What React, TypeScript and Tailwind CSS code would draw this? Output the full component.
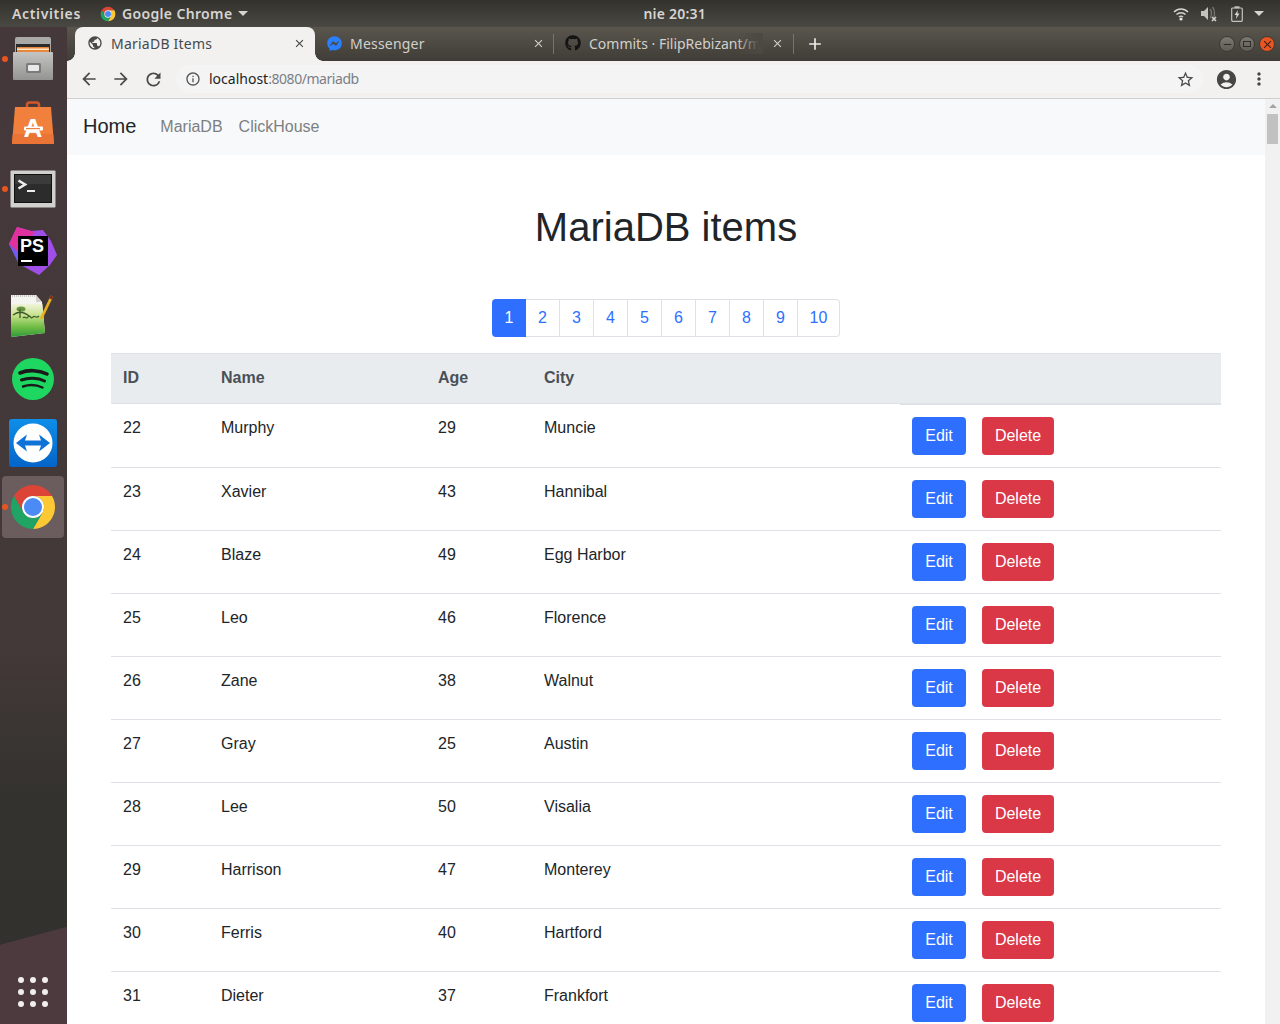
import { MdArrowBack, MdArrowForward, MdRefresh, MdInfoOutline, MdStarBorder, MdAccountCircle, MdMoreVert, MdPublic, MdClose, MdAdd, MdRemove } from "react-icons/md";
import { FaGithub, FaFacebookMessenger } from "react-icons/fa";

const items = [
  [22, "Murphy", 29, "Muncie"],
  [23, "Xavier", 43, "Hannibal"],
  [24, "Blaze", 49, "Egg Harbor"],
  [25, "Leo", 46, "Florence"],
  [26, "Zane", 38, "Walnut"],
  [27, "Gray", 25, "Austin"],
  [28, "Lee", 50, "Visalia"],
  [29, "Harrison", 47, "Monterey"],
  [30, "Ferris", 40, "Hartford"],
  [31, "Dieter", 37, "Frankfort"],
];

const ChromeLogo = ({ size }: { size: number }) => (
  <svg width={size} height={size} viewBox="0 0 48 48">
    <path fill="#db4437" d="M4.95 13A22 22 0 0 1 43.05 13L24 13A11 11 0 0 0 14.47 29.5Z" />
    <path fill="#fcc934" d="M43.05 13A22 22 0 0 1 24 46L33.53 29.5A11 11 0 0 0 24 13Z" />
    <path fill="#1fa463" d="M24 46A22 22 0 0 1 4.95 13L14.47 29.5A11 11 0 0 0 33.53 29.5Z" />
    <circle cx="24" cy="24" r="11" fill="#fff" />
    <circle cx="24" cy="24" r="9" fill="#4c8bf5" />
  </svg>
);

const FilesIcon = () => (
  <svg width="42" height="43" viewBox="0 0 42 43">
    <defs>
      <linearGradient id="cab" x1="0" y1="0" x2="0" y2="1">
        <stop offset="0" stopColor="#c4c4c2" />
        <stop offset="1" stopColor="#949492" />
      </linearGradient>
    </defs>
    <path d="M3 2Q3 0 5 0H37Q39 0 39 2V16H3Z" fill="#a9a9a7" />
    <rect x="4" y="7" width="34" height="11" fill="#2b2b2b" />
    <rect x="5" y="10" width="32" height="7" fill="#e8873c" />
    <rect x="5" y="11.5" width="32" height="1.5" fill="#fde6c4" />
    <rect x="1" y="15" width="40" height="28" rx="1" fill="url(#cab)" />
    <rect x="14" y="26" width="15" height="10" rx="1.5" fill="#7b7b7b" />
    <rect x="16" y="28" width="11" height="6" rx="1" fill="#e9e9e9" />
  </svg>
);

const SoftwareIcon = () => (
  <svg width="42" height="43" viewBox="0 0 42 43">
    <path d="M15 12V4a2.5 2.5 0 0 1 2.5-2.5h7A2.5 2.5 0 0 1 27 4v8" fill="none" stroke="#d4572a" strokeWidth="2.5" />
    <path d="M3 6H39L42 43H0Z" fill="#f0803c" />
    <path d="M0.8 33H41.2L42 43H0Z" fill="#ea7436" />
    <text x="21" y="36" textAnchor="middle" fontFamily="Liberation Sans" fontWeight="700" fontSize="26" fill="#fff">A</text>
    <rect x="12" y="25.5" width="19" height="4" rx="1" fill="#fff" />
    <rect x="14" y="27" width="14" height="1.2" fill="#f0803c" />
  </svg>
);

const TerminalIcon = () => (
  <svg width="46" height="38" viewBox="0 0 46 38">
    <rect x="0.5" y="0.5" width="45" height="37" rx="1" fill="#d0d0ce" />
    <rect x="4" y="4" width="38" height="29" fill="#111" />
    <rect x="5" y="5" width="36" height="27" fill="#2c2c2c" />
    <rect x="5" y="5" width="36" height="9" fill="#3b3b3b" />
    <path d="M8.5 10.5L15 14.5L8.5 18.5" fill="none" stroke="#ececec" strokeWidth="2.6" />
    <rect x="17" y="20" width="8" height="2" fill="#ececec" />
  </svg>
);

const PhpStormIcon = () => (
  <div className="relative w-[48px] h-[48px]">
    <svg width="48" height="48" viewBox="0 0 48 48" className="absolute inset-0">
      <path d="M8 0L22 4L34 3L42 14L48 28L41 38L30 48L10 37L0 17Z" fill="#a04ee8" />
      <path d="M8 0L26 5L10 26L0 17Z" fill="#e1319e" />
      <path d="M0 17L10 26L10 37Z" fill="#6d5cf0" />
    </svg>
    <div className="absolute left-[9px] top-[9px] w-[30px] h-[30px] bg-black">
      <span className="absolute left-[2px] top-[0px] text-[18px] leading-[20px] font-bold text-white font-['Liberation_Sans']">PS</span>
      <div className="absolute left-[3px] bottom-[4px] w-[11px] h-[2px] bg-white" />
    </div>
  </div>
);

const GeditIcon = () => (
  <svg width="46" height="42" viewBox="0 0 46 42">
    <defs>
      <linearGradient id="grass" x1="0" y1="0" x2="0" y2="1">
        <stop offset="0" stopColor="#f0f4dc" />
        <stop offset="0.35" stopColor="#c5e08a" />
        <stop offset="0.7" stopColor="#6fbc44" />
        <stop offset="1" stopColor="#2f9a3a" />
      </linearGradient>
    </defs>
    <path d="M1 0H26L32 7L35 38L1 42Z" fill="#f4f4f0" />
    <path d="M1 9H32.3L35 38L1 42Z" fill="url(#grass)" />
    <path d="M26 0L32 7L26 7Z" fill="#cfcfca" />
    <path d="M2 1H26" stroke="#9a9a98" strokeWidth="1.2" strokeDasharray="1 1" />
    <ellipse cx="11" cy="14" rx="4.5" ry="2.6" fill="#6a9440" />
    <path d="M3 20C8 16 13 16 19 21M10 14V23" stroke="#3c5a28" strokeWidth="1.3" fill="none" />
    <path d="M13 23C15 20 16 25 18 22C20 19 21 25 23 22C25 20 26 24 29 21" stroke="#3c5a28" strokeWidth="1.2" fill="none" />
    <path d="M42 1L31 24" stroke="#e8b020" strokeWidth="2.8" />
    <path d="M42 1L40.6 4" stroke="#7a2a20" strokeWidth="2.8" />
  </svg>
);

const SpotifyIcon = () => (
  <svg width="42" height="42" viewBox="0 0 42 42">
    <circle cx="21" cy="21" r="21" fill="#1ed760" />
    <path d="M8 15C16 11.5 27 12 35 16" fill="none" stroke="#1a1a1a" strokeWidth="3.6" strokeLinecap="round" />
    <path d="M9.5 22C16 19.5 26 19.5 32.5 23" fill="none" stroke="#1a1a1a" strokeWidth="3" strokeLinecap="round" />
    <path d="M11 28.5C17 26.5 25 27 30.5 29.5" fill="none" stroke="#1a1a1a" strokeWidth="2.4" strokeLinecap="round" />
  </svg>
);

const TeamViewerIcon = () => (
  <svg width="48" height="48" viewBox="0 0 48 48">
    <defs>
      <linearGradient id="tv" x1="0" y1="0" x2="0" y2="1">
        <stop offset="0" stopColor="#0e8ee9" />
        <stop offset="1" stopColor="#0564c8" />
      </linearGradient>
    </defs>
    <rect width="48" height="48" rx="3" fill="url(#tv)" />
    <circle cx="24" cy="24" r="19.5" fill="#fff" />
    <path d="M7 24L18 15.5L16 21.5H32L30 15.5L41 24L30 32.5L32 26.5H16L18 32.5Z" fill="#0e72d6" />
  </svg>
);

const Dot = () => <div className="absolute left-[2px] top-1/2 -mt-[3px] w-[6px] h-[6px] rounded-full bg-[#e95420]" />;

const Dock = () => (
  <div className="relative w-[67px] shrink-0 flex flex-col items-center pt-[10px] pr-[1px] bg-[linear-gradient(180deg,#45383b_0%,#433938_62%,#33322e_78%,#33312e_100%)]">
    {/* wave at the bottom of the dock */}
    <div className="absolute left-0 right-0 bottom-0 h-[97px] bg-[linear-gradient(to_bottom_right,transparent_49%,#4d3a3f_50%)] bg-[length:100%_18px] bg-no-repeat" />
    <div className="absolute left-0 right-0 bottom-0 h-[79px] bg-[#4d3a3f]" />

    <div className="relative w-full h-[43px] flex items-center justify-center"><Dot /><FilesIcon /></div>
    <div className="relative w-full h-[43px] mt-[21px] flex items-center justify-center"><SoftwareIcon /></div>
    <div className="relative w-full h-[38px] mt-[26px] flex items-center justify-center"><Dot /><TerminalIcon /></div>
    <div className="relative w-full h-[48px] mt-[19px] flex items-center justify-center"><PhpStormIcon /></div>
    <div className="relative w-full h-[42px] mt-[20px] flex items-center justify-center"><GeditIcon /></div>
    <div className="relative w-full h-[42px] mt-[21px] mb-[1px] flex items-center justify-center"><SpotifyIcon /></div>
    <div className="relative w-full h-[48px] mt-[18px] flex items-center justify-center"><TeamViewerIcon /></div>
    <div className="relative w-full h-[62px] mt-[9px] flex items-center justify-center">
      <div className="w-[62px] h-[62px] rounded-[4px] bg-[#6b5c5e] flex items-center justify-center"><ChromeLogo size={48} /></div>
      <Dot />
    </div>

    <div className="relative mt-auto mb-[17px] grid grid-cols-3 gap-[6px]">
      {[...Array(9)].map((_, i) => (
        <div key={i} className="w-[6px] h-[6px] rounded-full bg-[#f0eeee]" />
      ))}
    </div>
  </div>
);

const TopBar = () => (
  <div className="h-[27px] shrink-0 flex items-center bg-[linear-gradient(180deg,#34322d_0%,#4a4842_100%)] text-[#d6d5d1] text-[14px] font-['Noto_Sans',sans-serif] font-semibold relative">
    <span className="ml-[12px] tracking-[0.65px]">Activities</span>
    <span className="ml-[19px]"><ChromeLogo size={16} /></span>
    <span className="ml-[6px] tracking-[0.35px]">Google Chrome</span>
    <span className="ml-[6px] border-x-[5px] border-x-transparent border-t-[5px] border-t-[#d6d5d1]" />
    <span className="ml-[395px] tracking-[0.2px]">nie 20:31</span>
    <div className="ml-auto mr-[16px] flex items-center">
      <svg width="16" height="14" viewBox="0 0 16 14">
        <path d="M1 5C5 1 11 1 15 5M3.5 7.5C6 5.2 10 5.2 12.5 7.5M6 10C7 9 9 9 10 10" fill="none" stroke="#d6d5d1" strokeWidth="1.4" />
        <circle cx="8" cy="12" r="1.6" fill="#e6e5e1" />
      </svg>
      <svg width="18" height="16" viewBox="0 0 18 16" className="ml-[11px]">
        <path d="M1 5H4L8 1V14L4 10H1Z" fill="#c4c3bf" />
        <path d="M10 3C12 5 12 10 10 12M12.5 1C15 4 15 10 13.5 11" fill="none" stroke="#77756f" strokeWidth="1.3" />
        <path d="M12 11L16 15M16 11L12 15" stroke="#d6d5d1" strokeWidth="1.6" />
      </svg>
      <svg width="12" height="16" viewBox="0 0 12 16" className="ml-[13px]">
        <rect x="0.7" y="2" width="10.6" height="13.3" rx="1" fill="none" stroke="#c4c3bf" strokeWidth="1.2" />
        <rect x="3.5" y="0.3" width="5" height="2" fill="#c4c3bf" />
        <path d="M7 4L3.5 9H5.5L5 13L8.5 7.5H6.4Z" fill="#d6d5d1" />
      </svg>
      <span className="ml-[11px] border-x-[5px] border-x-transparent border-t-[5px] border-t-[#d6d5d1]" />
    </div>
  </div>
);

const TabStrip = () => (
  <div className="h-[34px] shrink-0 flex items-center bg-[linear-gradient(180deg,#5a564e_0%,#3f3d37_100%)] font-['Noto_Sans',sans-serif] text-[14px] pl-[8px]">
    {/* active tab */}
    <div className="relative w-[240px] h-full rounded-t-[8px] bg-[#f2f1f0] flex items-center text-[#45494d] pl-[12px] pr-[9px] pb-[2px]">
      <div className="absolute -left-[8px] bottom-0 w-[8px] h-[8px] bg-[radial-gradient(circle_at_0_0,transparent_7.5px,#f2f1f0_8px)]" />
      <div className="absolute -right-[8px] bottom-0 w-[8px] h-[8px] bg-[radial-gradient(circle_at_100%_0,transparent_7.5px,#f2f1f0_8px)]" />
      <MdPublic className="text-[16px] text-[#4a4a4a] shrink-0" />
      <span className="ml-[8px] tracking-[0.23px]">MariaDB Items</span>
      <MdClose className="ml-auto text-[13px] text-[#444]" />
    </div>
    <div className="w-[238px] h-full flex items-center text-[#d2d0cb] pl-[12px] pr-[8px] pb-[2px]">
      <FaFacebookMessenger className="text-[15px] text-[#2a7fff] shrink-0" />
      <span className="ml-[8px] tracking-[0.2px]">Messenger</span>
      <MdClose className="ml-auto text-[13px] text-[#d2d0cb]" />
    </div>
    <div className="w-px h-[20px] bg-[#76736c]" />
    <div className="w-[239px] h-full flex items-center text-[#d2d0cb] pl-[11px] pr-[9px] pb-[2px]">
      <FaGithub className="text-[16px] text-[#141414] shrink-0" />
      <div className="relative ml-[8px] w-[174px] overflow-hidden whitespace-nowrap">
        Commits · FilipRebizant/mariadb
        <div className="absolute right-0 top-0 bottom-0 w-[26px] bg-[linear-gradient(90deg,transparent,#4c4943_85%)]" />
      </div>
      <MdClose className="ml-auto text-[13px] text-[#d2d0cb]" />
    </div>
    <div className="w-px h-[20px] bg-[#76736c]" />
    <MdAdd className="ml-[11px] text-[#ecebe8] text-[20px]" />
    <div className="ml-auto mr-[5px] flex items-center gap-[4px]">
      <div className="w-[16px] h-[16px] rounded-full bg-[linear-gradient(180deg,#7a7870,#5f5d56)] border border-[#3c3a35] flex items-center justify-center">
        <MdRemove className="text-[13px] text-[#2f2e2a]" />
      </div>
      <div className="w-[16px] h-[16px] rounded-full bg-[linear-gradient(180deg,#7a7870,#5f5d56)] border border-[#3c3a35] flex items-center justify-center">
        <div className="w-[8px] h-[6px] border border-[#2f2e2a]" />
      </div>
      <div className="w-[16px] h-[16px] rounded-full bg-[#e95420] border border-[#3c3a35] flex items-center justify-center">
        <MdClose className="text-[13px] text-[#3a2318]" />
      </div>
    </div>
  </div>
);

const Toolbar = () => (
  <div className="h-[38px] shrink-0 flex items-center bg-[#f2f1f0] border-b border-[#cfcfcf] pb-[1px]">
    <MdArrowBack className="ml-[12px] text-[20px] text-[#4a4a4a]" />
    <MdArrowForward className="ml-[12px] text-[20px] text-[#4a4a4a]" />
    <MdRefresh className="ml-[12px] text-[21px] text-[#4a4a4a]" />
    <div className="ml-[12px] w-[1027px] h-[28px] rounded-[14px] bg-[#f4f4f5] flex items-center pl-[9px] pr-[8px]">
      <MdInfoOutline className="text-[16px] text-[#555]" />
      <span className="ml-[8px] mb-[2px] text-[14px] font-['Noto_Sans',sans-serif] text-[#1f1f1f]">
        localhost<span className="text-[#7b7f84] tracking-[-0.45px]">:8080/mariadb</span>
      </span>
      <MdStarBorder className="ml-auto text-[19px] text-[#4a4a4a]" />
    </div>
    <MdAccountCircle className="ml-[12px] text-[23px] text-[#464646]" />
    <MdMoreVert className="ml-[11px] text-[20px] text-[#464646]" />
  </div>
);

const Pagination = () => (
  <div className="flex justify-center">
    <div className="flex h-[38px]">
      <span className="w-[34px] flex items-center justify-center bg-[#2e6fff] text-white rounded-l-[4px]">1</span>
      {[2, 3, 4, 5, 6, 7, 8, 9].map((n) => (
        <span key={n} className="w-[34px] flex items-center justify-center border border-l-0 border-[#dee2e6] text-[#2e6fff]">{n}</span>
      ))}
      <span className="w-[42px] flex items-center justify-center border border-l-0 border-[#dee2e6] text-[#2e6fff] rounded-r-[4px]">10</span>
    </div>
  </div>
);

const ItemsTable = () => (
  <table className="w-[1110px] mt-[16px] table-fixed border-collapse text-left text-[#212529]">
    <thead>
      <tr className="bg-[#e9ecef] text-[#495057] h-[50px] border-t border-[#dee2e6]">
        <th className="w-[98px] pl-[12px] pb-[2px] font-bold border-b border-[#dee2e6]">ID</th>
        <th className="w-[217px] pl-[12px] pb-[2px] font-bold border-b border-[#dee2e6]">Name</th>
        <th className="w-[106px] pl-[12px] pb-[2px] font-bold border-b border-[#dee2e6]">Age</th>
        <th className="w-[368px] pl-[12px] pb-[2px] font-bold border-b border-[#dee2e6]">City</th>
        <th className="border-b-2 border-[#dee2e6]"></th>
      </tr>
    </thead>
    <tbody>
      {items.map((row) => (
        <tr key={row[0]} className="border-b border-[#dee2e6]">
          <td className="p-[12px] align-top">{row[0]}</td>
          <td className="p-[12px] align-top">{row[1]}</td>
          <td className="p-[12px] align-top">{row[2]}</td>
          <td className="p-[12px] align-top">{row[3]}</td>
          <td className="p-[12px] align-top">
            <div className="flex gap-[16px]">
              <span className="w-[54px] h-[38px] flex items-center justify-center rounded-[4px] bg-[#2e6fff] text-white">Edit</span>
              <span className="w-[72px] h-[38px] flex items-center justify-center rounded-[4px] bg-[#da3747] text-white">Delete</span>
            </div>
          </td>
        </tr>
      ))}
    </tbody>
  </table>
);

const Page = () => (
  <div className="flex-1 flex min-h-0 font-['Liberation_Sans',sans-serif] text-[16px] bg-white">
    <div className="flex-1 min-w-0 overflow-hidden">
      <nav className="h-[56px] bg-[#f8f9fa] flex items-center pl-[16px]">
        <span className="text-[20px] text-[#212529] mb-[2px]">Home</span>
        <span className="ml-[24px] text-[#7c7f82]">MariaDB</span>
        <span className="ml-[16px] text-[#7c7f82]">ClickHouse</span>
      </nav>
      <div className="w-[1110px] mx-auto">
        <h1 className="mt-[48px] h-[48px] leading-[48px] text-center text-[40px] text-[#212529]">MariaDB items</h1>
        <div className="mt-[48px]"><Pagination /></div>
        <ItemsTable />
      </div>
    </div>
    {/* scrollbar */}
    <div className="w-[15px] shrink-0 bg-[#f1f1f1] flex flex-col items-center pt-[5px]">
      <div className="border-x-[4px] border-x-transparent border-b-[4px] border-b-[#a3a3a3]" />
      <div className="mt-[6px] w-[11px] h-[30px] bg-[#c1c1c1]" />
    </div>
  </div>
);

export default function App() {
  return (
    <div className="w-[1280px] h-[1024px] overflow-hidden flex flex-col">
      <TopBar />
      <div className="flex-1 flex min-h-0">
        <Dock />
        <div className="flex-1 min-w-0 flex flex-col">
          <TabStrip />
          <Toolbar />
          <Page />
        </div>
      </div>
    </div>
  );
}
